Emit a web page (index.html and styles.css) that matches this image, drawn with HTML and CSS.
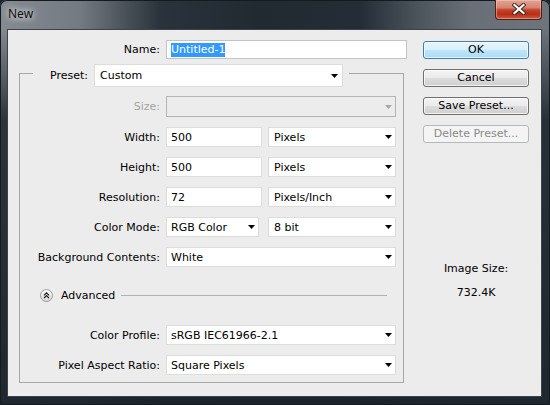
FILE: index.html
```html
<!DOCTYPE html>
<html>
<head>
<meta charset="utf-8">
<title>New</title>
<link rel="stylesheet" href="styles.css">
</head>
<body>
<div class="window">
  <div class="titlebar">
    <div class="title">New</div>
    <div class="close">
      <svg width="14" height="12" viewBox="0 0 14 12">
        <path d="M2.5 2 L11.5 10 M11.5 2 L2.5 10" stroke="#3a2a28" stroke-width="4.2" stroke-linecap="square" fill="none"/>
        <path d="M2.5 2 L11.5 10 M11.5 2 L2.5 10" stroke="#ffffff" stroke-width="2.2" stroke-linecap="square" fill="none"/>
      </svg>
    </div>
  </div>
  <div class="client">
    <div class="form">
      <div class="row name-row">
        <span class="lbl lbl-name">Name:</span>
        <div class="field name-field"><span class="selected">Untitled-1</span></div>
      </div>
      <fieldset class="group">
        <legend class="legend">
          <div class="legend-inner">
            <span class="lbl-preset">Preset:</span>
            <div class="field select preset"><span>Custom</span><svg class="arrow" width="7" height="4" viewBox="0 0 7 4"><path d="M0 0H7L3.5 4Z"/></svg></div>
          </div>
        </legend>
        <div class="row size-row">
          <span class="lbl disabled">Size:</span>
          <div class="field select wide is-disabled"><span></span><svg class="arrow" width="7" height="4" viewBox="0 0 7 4"><path d="M0 0H7L3.5 4Z"/></svg></div>
        </div>
        <div class="row">
          <span class="lbl">Width:</span>
          <div class="field num">500</div>
          <div class="field select unit"><span>Pixels</span><svg class="arrow" width="7" height="4" viewBox="0 0 7 4"><path d="M0 0H7L3.5 4Z"/></svg></div>
        </div>
        <div class="row">
          <span class="lbl">Height:</span>
          <div class="field num">500</div>
          <div class="field select unit"><span>Pixels</span><svg class="arrow" width="7" height="4" viewBox="0 0 7 4"><path d="M0 0H7L3.5 4Z"/></svg></div>
        </div>
        <div class="row">
          <span class="lbl">Resolution:</span>
          <div class="field num">72</div>
          <div class="field select unit"><span>Pixels/Inch</span><svg class="arrow" width="7" height="4" viewBox="0 0 7 4"><path d="M0 0H7L3.5 4Z"/></svg></div>
        </div>
        <div class="row">
          <span class="lbl">Color Mode:</span>
          <div class="field select mode"><span>RGB Color</span><svg class="arrow" width="7" height="4" viewBox="0 0 7 4"><path d="M0 0H7L3.5 4Z"/></svg></div>
          <div class="field select unit"><span>8 bit</span><svg class="arrow" width="7" height="4" viewBox="0 0 7 4"><path d="M0 0H7L3.5 4Z"/></svg></div>
        </div>
        <div class="row">
          <span class="lbl">Background Contents:</span>
          <div class="field select wide"><span>White</span><svg class="arrow" width="7" height="4" viewBox="0 0 7 4"><path d="M0 0H7L3.5 4Z"/></svg></div>
        </div>
        <div class="advanced">
          <svg class="adv-icon" width="13" height="13" viewBox="0 0 13 13">
            <defs>
              <linearGradient id="g" x1="0" y1="0" x2="0" y2="1">
                <stop offset="0" stop-color="#ffffff"/>
                <stop offset="1" stop-color="#d6d6d6"/>
              </linearGradient>
            </defs>
            <circle cx="6.5" cy="6.5" r="6" fill="url(#g)" stroke="#9a9a9a"/>
            <path d="M4 6.3 L6.5 3.8 L9 6.3 M4 9.2 L6.5 6.7 L9 9.2" stroke="#1a1a1a" stroke-width="1.2" fill="none"/>
          </svg>
          <span class="adv-text">Advanced</span>
          <span class="adv-line"></span>
        </div>
        <div class="row profile-row">
          <span class="lbl">Color Profile:</span>
          <div class="field select wide"><span>sRGB IEC61966-2.1</span><svg class="arrow" width="7" height="4" viewBox="0 0 7 4"><path d="M0 0H7L3.5 4Z"/></svg></div>
        </div>
        <div class="row">
          <span class="lbl">Pixel Aspect Ratio:</span>
          <div class="field select wide"><span>Square Pixels</span><svg class="arrow" width="7" height="4" viewBox="0 0 7 4"><path d="M0 0H7L3.5 4Z"/></svg></div>
        </div>
      </fieldset>
    </div>
    <div class="side">
      <div class="btn btn-default">OK</div>
      <div class="btn">Cancel</div>
      <div class="btn">Save Preset...</div>
      <div class="btn btn-disabled">Delete Preset...</div>
      <div class="size-label">Image Size:</div>
      <div class="size-value">732.4K</div>
    </div>
  </div>
</div>
</body>
</html>
```
FILE: styles.css
```css
html, body {
  margin: 0;
  padding: 0;
  background: #1c242c;
}

body {
  font-family: "DejaVu Sans", sans-serif;
  font-size: 11px;
  color: #000;
  width: 550px;
  height: 405px;
  overflow: hidden;
}

.window {
  width: 550px;
  height: 405px;
  box-sizing: border-box;
  display: flex;
  flex-direction: column;
  border-radius: 7px 7px 3px 3px;
  overflow: hidden;
  background:
    linear-gradient(to bottom, rgba(28, 36, 44, 0) 0, rgba(28, 36, 44, 0) 28px, rgba(28, 36, 44, 0.85) 120px, rgba(26, 34, 42, 0.95) 405px),
    linear-gradient(to right, #858b91 0, #747a81 80px, #4a5259 125px, #2a323b 160px, #212931 260px, #242c35 360px, #4d555d 420px, #686f76 470px, #6d747b 550px);
  box-shadow: inset 0 0 0 1px #141a20;
}

.titlebar {
  height: 29px;
  flex: none;
  display: flex;
  justify-content: space-between;
  align-items: flex-start;
}

.title {
  font-family: "Noto Sans", "DejaVu Sans", sans-serif;
  font-size: 12px;
  line-height: 16px;
  padding: 6px 0 0 8px;
  color: #101010;
  text-shadow: 0 0 6px rgba(255, 255, 255, 0.9), 0 0 10px rgba(255, 255, 255, 0.6);
}

.close {
  width: 47px;
  height: 20px;
  margin-right: 8px;
  box-sizing: border-box;
  border: 1px solid #4a2018;
  border-top: none;
  border-radius: 0 0 4px 4px;
  background: linear-gradient(to bottom, #e2a496 0, #d68472 40%, #c4432b 52%, #b92e16 75%, #cf5a3d 100%);
  box-shadow: inset 0 0 0 1px rgba(255, 210, 200, 0.45);
  display: flex;
  align-items: center;
  justify-content: center;
}

.close svg {
  display: block;
  margin-top: -1px;
}

.client {
  flex: 1;
  margin: 0 8px 8px 7px;
  border: 1px solid #3b444d;
  background: #ececec;
  display: flex;
  align-items: flex-start;
}

.form {
  width: 399px;
  padding-top: 10px;
}

.row {
  display: flex;
  align-items: center;
  gap: 6px;
}

.lbl {
  width: 140px;
  text-align: right;
  line-height: 13px;
  white-space: nowrap;
}

.lbl-name {
  width: 152px;
}

.lbl.disabled {
  color: #a3a3a3;
}

.field {
  box-sizing: border-box;
  height: 20px;
  background: #fff;
  border: 1px solid #dcdcdc;
  display: flex;
  align-items: center;
  padding: 0 3px 0 4px;
  line-height: 13px;
  white-space: nowrap;
}

.select {
  justify-content: space-between;
}

.arrow {
  display: block;
  fill: #000;
  flex: none;
}

.name-field {
  width: 241px;
  height: 19px;
  border-color: #c4c4c4;
}

.selected {
  background: #3399ff;
  color: #fff;
  line-height: 14px;
}

.group {
  margin: 0 0 0 11px;
  padding: 0 0 7px 0;
  min-width: 0;
  width: 385px;
  box-sizing: border-box;
  border: 1px solid #a7a7a7;
}

.legend {
  margin-left: 13px;
  padding: 5px 6px 0 17px;
}

.legend-inner {
  display: flex;
  align-items: center;
  gap: 6px;
}

.lbl-preset {
  line-height: 13px;
}

.preset {
  width: 249px;
  height: 23px;
  padding-left: 5px;
  padding-right: 4px;
}

.group .row {
  margin-top: 10px;
}

.group .size-row {
  margin-top: 9px;
}

.wide {
  width: 230px;
}

.is-disabled {
  background: #ececec;
  border-color: #b4b4b4;
  height: 21px;
}

.is-disabled .arrow {
  fill: #a8a8a8;
}

.num {
  width: 96px;
}

.unit {
  width: 128px;
  padding-left: 5px;
}

.mode {
  width: 93px;
  margin-right: 3px;
}

.advanced {
  display: flex;
  align-items: center;
  height: 20px;
  margin-top: 18px;
  padding-left: 20px;
}

.adv-icon {
  display: block;
  flex: none;
}

.adv-text {
  margin-left: 8px;
  line-height: 13px;
}

.adv-line {
  flex: 1;
  height: 0;
  border-top: 1px solid #b2b2b2;
  margin: 1px 16px 0 6px;
}

.group .profile-row {
  margin-top: 20px;
}

.side {
  width: 106px;
  margin-left: 16px;
  padding-top: 11px;
  display: flex;
  flex-direction: column;
  gap: 10px;
}

.btn {
  height: 18px;
  box-sizing: border-box;
  border: 1px solid #707070;
  border-radius: 3px;
  background: linear-gradient(to bottom, #f3f3f3 0, #ebebeb 48%, #dcdcdc 52%, #cfcfcf 100%);
  box-shadow: inset 0 0 0 1px rgba(255, 255, 255, 0.7);
  text-align: center;
  line-height: 16px;
}

.btn-default {
  border-color: #3c7fb1;
  background: linear-gradient(to bottom, #e8f5fc 0, #d9f0fc 48%, #bee6fd 52%, #a9dbf6 100%);
  box-shadow: inset 0 0 0 1px rgba(255, 255, 255, 0.75), 0 0 0 0 transparent;
}

.btn-disabled {
  border-color: #b5b8ba;
  background: #f4f4f4;
  color: #8a8a8a;
  box-shadow: none;
}

.size-label {
  margin-top: 109px;
  text-align: center;
  line-height: 13px;
}

.size-value {
  margin-top: 1px;
  text-align: center;
  line-height: 13px;
}
```
